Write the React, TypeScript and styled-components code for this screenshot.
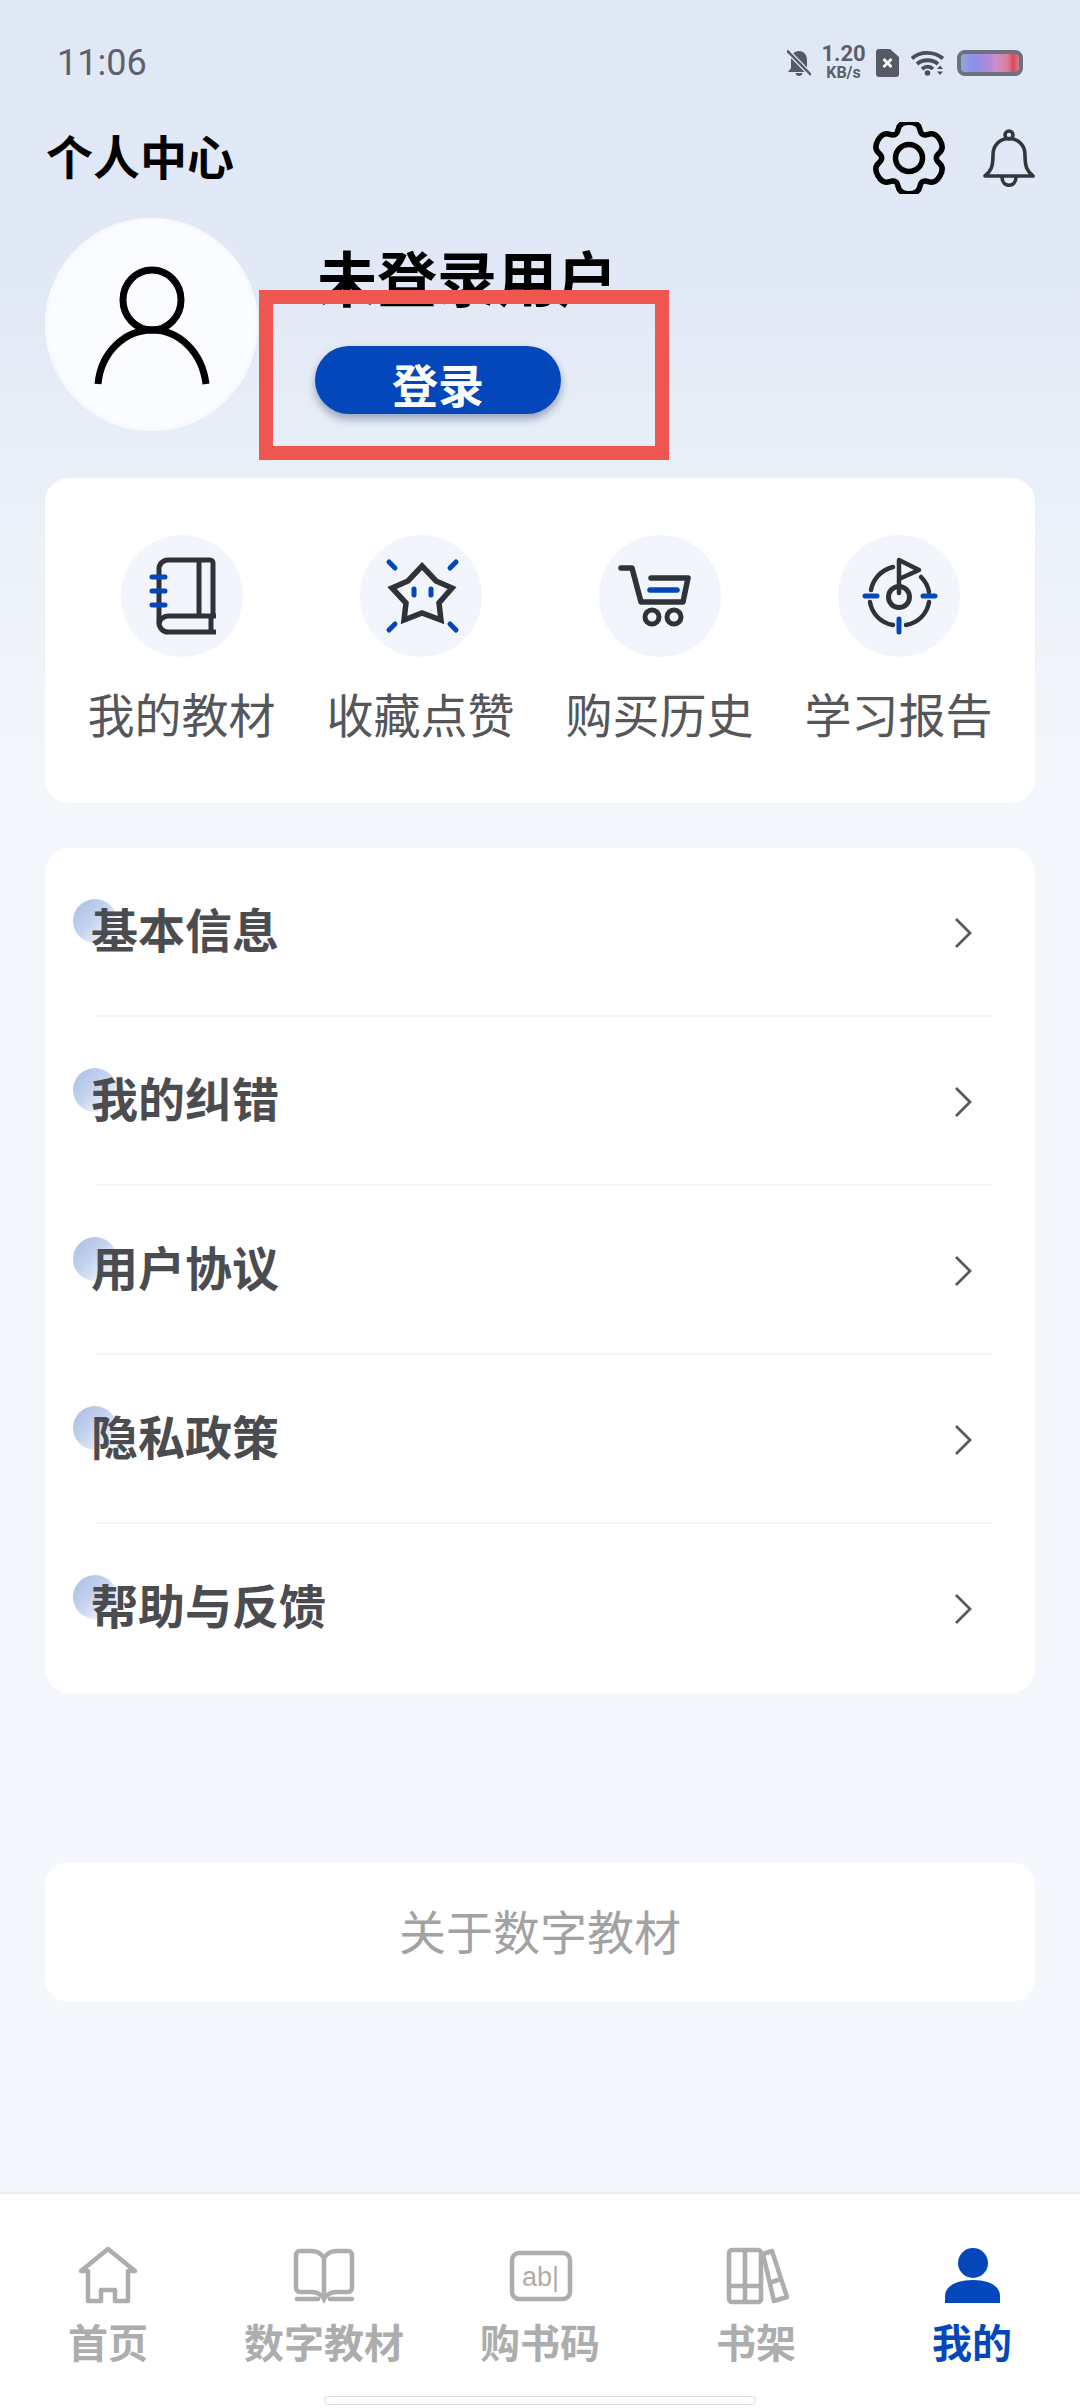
import styled, { createGlobalStyle } from 'styled-components';

const BLUE = '#0447ba';
const INK = '#2f3238';
const GREY = '#adadad';

const GlobalStyle = createGlobalStyle`
  html, body {
    margin: 0;
    padding: 0;
    background: #f4f7fb;
  }
  * {
    box-sizing: border-box;
  }
`;

const Page = styled.div`
  position: relative;
  width: 1080px;
  height: 2408px;
  display: flex;
  flex-direction: column;
  overflow: hidden;
  background: linear-gradient(180deg, #e0e8f5 0%, #e2e9f6 12%, #eaf0f8 20%, #f3f7fb 32%, #f4f7fb 100%);
  font-family: 'Noto Sans CJK SC', 'Noto Sans', sans-serif;
`;

const StatusBar = styled.div`
  height: 90px;
  padding: 36px 57px 0;
  display: flex;
  align-items: center;
  justify-content: space-between;
`;

const Time = styled.span`
  font-family: Roboto, sans-serif;
  font-size: 36px;
  color: #5a606c;
`;

const StatusIcons = styled.div`
  display: flex;
  align-items: center;
  gap: 12px;
`;

const Speed = styled.div`
  width: 41px;
  display: flex;
  flex-direction: column;
  align-items: center;
  font-family: Roboto, sans-serif;
  font-weight: 700;
  color: #5a5f6b;
  span:first-child {
    font-size: 22px;
    line-height: 20px;
  }
  span:last-child {
    font-size: 16px;
    line-height: 18px;
  }
`;

const Battery = styled.div`
  width: 66px;
  height: 26px;
  border: 4px solid #6c7180;
  border-radius: 8px;
  background: linear-gradient(90deg, #8fa8d8 0%, #8c8ee8 22%, #a98ada 42%, #cf8cc8 62%, #d97f96 80%, #d9465c 90%, #d9798c 100%);
`;

const Header = styled.header`
  height: 128px;
  padding: 0 45px 0 46px;
  display: flex;
  align-items: center;
  justify-content: space-between;
`;

const Title = styled.h1`
  margin: 0;
  font-size: 47px;
  font-weight: 700;
  color: #000;
`;

const HeaderIcons = styled.div`
  padding-top: 8px;
  display: flex;
  align-items: center;
  gap: 38px;
`;

const Profile = styled.section`
  height: 213px;
  padding-left: 45px;
  display: flex;
  gap: 57px;
`;

const Avatar = styled.div`
  width: 213px;
  height: 213px;
  border-radius: 50%;
  background: #fafcff;
  box-shadow: inset 0 0 0 3px #f6f9fe;
`;

const ProfileInfo = styled.div`
  padding-top: 24px;
  display: flex;
  flex-direction: column;
  align-items: flex-start;
`;

const UserName = styled.div`
  margin-left: 2px;
  font-size: 60px;
  line-height: 68px;
  font-weight: 700;
  color: #000;
`;

const LoginButton = styled.button`
  margin-top: 36px;
  width: 246px;
  height: 68px;
  border: 0;
  border-radius: 34px;
  padding: 6px 0 0;
  background: ${BLUE};
  box-shadow: 0 5px 9px rgba(50, 70, 110, 0.45);
  color: #fff;
  font-family: inherit;
  font-size: 46px;
  line-height: 62px;
  font-weight: 700;
`;

const RedFrame = styled.div`
  position: absolute;
  left: 259px;
  top: 290px;
  width: 410px;
  height: 170px;
  border: 14px solid #ef5650;
`;

const Card = styled.section<{ $top: number }>`
  margin: ${(p) => p.$top}px 45px 0;
  border-radius: 24px;
  background: #fff;
`;

const ShortcutGrid = styled(Card)`
  height: 325px;
  padding: 57px 17px 0;
  display: grid;
  grid-template-columns: repeat(4, 1fr);
  align-items: start;
`;

const Shortcut = styled.div`
  display: flex;
  flex-direction: column;
  align-items: center;
  gap: 26px;
`;

const ShortcutBadge = styled.div`
  width: 122px;
  height: 122px;
  border-radius: 50%;
  background: #f3f5fc;
`;

const ShortcutLabel = styled.span`
  font-size: 47px;
  line-height: 60px;
  color: #555659;
`;

const Row = styled.div<{ $last?: boolean }>`
  position: relative;
  height: 169px;
  padding: 0 62px 0 46px;
  display: flex;
  align-items: center;
  justify-content: space-between;
  &::before {
    content: '';
    position: absolute;
    left: 28px;
    top: 50%;
    width: 44px;
    height: 44px;
    margin-top: -34px;
    border-radius: 50%;
    background: linear-gradient(135deg, #a9bde4 0%, #c4d2ee 45%, #f6f8fd 90%);
  }
  &::after {
    content: '';
    display: ${(p) => (p.$last ? 'none' : 'block')};
    position: absolute;
    left: 50px;
    right: 43px;
    bottom: 0;
    height: 2px;
    background: #f5f5f7;
  }
`;

const RowLabel = styled.span`
  position: relative;
  padding-bottom: 10px;
  font-size: 47px;
  font-weight: 700;
  color: #4b4c50;
`;

const AboutCard = styled(Card)`
  height: 140px;
  padding-bottom: 6px;
  display: flex;
  align-items: center;
  justify-content: center;
  font-size: 47px;
  color: #a2a2a4;
`;

const TabBar = styled.nav`
  margin-top: auto;
  height: 216px;
  border-top: 2px solid #e9ebee;
  background: #fff;
  display: flex;
  flex-direction: column;
  align-items: center;
`;

const Tabs = styled.div`
  width: 100%;
  padding-top: 52px;
  display: grid;
  grid-template-columns: repeat(5, 1fr);
`;

const Tab = styled.div<{ $active?: boolean }>`
  display: flex;
  flex-direction: column;
  align-items: center;
  color: ${(p) => (p.$active ? BLUE : GREY)};
  font-size: 40px;
  line-height: 50px;
  font-weight: 700;
  svg {
    display: block;
    margin-bottom: 10px;
  }
`;

const HomeIndicator = styled.div`
  margin-top: 30px;
  width: 432px;
  height: 9px;
  border: 1.5px solid #dcdde0;
  border-radius: 5px;
  background: #fff;
`;

// gear outline: six lobes, corners smoothed by running the path through midpoints
const gearPath = () => {
  const pts: [number, number][] = [];
  for (let i = 0; i < 6; i++) {
    const a = -90 + i * 60;
    [
      [a - 15, 37],
      [a + 15, 37],
      [a + 30, 24.5],
    ].forEach(([deg, r]) => {
      const rad = (deg * Math.PI) / 180;
      pts.push([36 + r * Math.cos(rad), 36 + r * Math.sin(rad)]);
    });
  }
  const mid = (p: number[], q: number[]) => `${((p[0] + q[0]) / 2).toFixed(1)} ${((p[1] + q[1]) / 2).toFixed(1)}`;
  let d = `M${mid(pts[0], pts[1])}`;
  for (let i = 1; i <= pts.length; i++) {
    const cur = pts[i % pts.length];
    const next = pts[(i + 1) % pts.length];
    d += `Q${cur[0].toFixed(1)} ${cur[1].toFixed(1)} ${mid(cur, next)}`;
  }
  return d + 'Z';
};

const GearIcon = () => (
  <svg width='72' height='72' viewBox='0 0 72 72' fill='none' stroke='#000' strokeWidth='5.5'>
    <path d={gearPath()} strokeLinejoin='round' />
    <circle cx='36' cy='36' r='13.5' />
  </svg>
);

const BellIcon = () => (
  <svg width='52' height='58' viewBox='0 0 52 58' fill='none' stroke='#33363c' strokeWidth='3.6' strokeLinejoin='round'>
    <circle cx='26' cy='6' r='4' />
    <path d='M2 47c6-5 8-9 8-21C10 16 17 9.500 26 9.500S42 16 42 26c0 12 2 16 8 21Z' />
    <path d='M19 48c0 11 14 11 14 0' />
  </svg>
);

const MutedBell = () => (
  <svg width='24' height='28' viewBox='0 0 24 28'>
    <path fill='#555a66' d='M12 2c5 0 8 4 8 9v8l3 4H1l3-4v-8c0-5 3-9 8-9ZM8.500 24h7c0 4-7 4-7 0Z' />
    <path d='M0 1.500 24 26' stroke='#e0e7f4' strokeWidth='5' />
    <path d='M0 1.500 24 26' stroke='#555a66' strokeWidth='2.500' />
  </svg>
);

const SimIcon = () => (
  <svg width='23' height='28' viewBox='0 0 23 28'>
    <path fill='#555a66' d='M3 0h11l9 8v17a3 3 0 0 1-3 3H3a3 3 0 0 1-3-3V3a3 3 0 0 1 3-3Z' />
    <path d='M7.500 10 15.500 18M15.500 10 7.500 18' stroke='#fff' strokeWidth='2.800' />
  </svg>
);

const WifiIcon = () => (
  <svg width='34' height='26' viewBox='0 0 34 26' fill='none' stroke='#4a4f5a' strokeWidth='3.800'>
    <path d='M1 8.500C9 1 23 1 32 8.500' />
    <path d='M6 14c6-5 15-5 21 0' />
    <path d='M11 19c3.500-3 8-3 11 0' />
    <circle cx='16.500' cy='23' r='2.800' fill='#4a4f5a' stroke='none' />
    <path d='M26 19l3-3.500 3 3.500ZM26 21.500l3 3.500 3-3.500Z' fill='#4a4f5a' stroke='none' />
  </svg>
);

const AvatarIcon = () => (
  <svg width='213' height='213' viewBox='0 0 213 213' fill='none' stroke='#000' strokeWidth='7'>
    <ellipse cx='107' cy='82' rx='29' ry='30' />
    <path d='M53 166C56 134 80 112 107 112S157 134 161 166' />
  </svg>
);

const BookIcon = () => (
  <svg width='122' height='122' viewBox='0 0 122 122' fill='none' stroke={INK} strokeWidth='5'>
    <path strokeLinejoin='round' d='M92 81V28a3 3 0 0 0-3-3H47a9 9 0 0 0-9 9v54a9 9 0 0 0 9 9h48' />
    <path d='M78 25V81M95 81H47a9 9 0 0 0-9 8M90 81v14' />
    <path d='M31 42H44M31 56H44M31 70H44' stroke={BLUE} strokeLinecap='round' />
  </svg>
);

const StarIcon = () => (
  <svg width='122' height='122' viewBox='0 0 122 122' fill='none' stroke={INK} strokeWidth='5.500'>
    <path d='M62 31 76 46 92 53 79 68 81 85 62 78 44 85 46 68 32 53 48 46Z' />
    <g stroke={BLUE} strokeLinecap='round'>
      <path strokeWidth='5' d='M54 54V60M71 54V60' />
      <path strokeWidth='5' d='M29 27 35 33M96 27 90 33M29 95 35 89M96 95 90 89' />
    </g>
  </svg>
);

const CartIcon = () => (
  <svg width='122' height='122' viewBox='0 0 122 122' fill='none' stroke={INK} strokeWidth='5.500' strokeLinecap='round' strokeLinejoin='round'>
    <path d='M22 33H33L42 67H84L89 43H52' />
    <path d='M51 55H78' stroke={BLUE} />
    <circle cx='53' cy='82' r='7' strokeWidth='5' />
    <circle cx='75' cy='82' r='7' strokeWidth='5' />
  </svg>
);

const TargetIcon = () => (
  <svg width='122' height='122' viewBox='0 0 122 122' fill='none' stroke={INK} strokeWidth='4.500' strokeLinecap='round' strokeLinejoin='round'>
    <path d='M33 55C35 44 43 35 55 32M83 42C87 46 90 51 91 57M91 67C89 79 80 88 68 90M55 90C43 88 34 79 32 67' />
    <circle cx='61' cy='62' r='10.500' strokeWidth='5' />
    <path d='M61 58V25L81 35 61 44' />
    <path d='M27 61H39M85 61H97M61 84V97' stroke={BLUE} strokeWidth='5' />
  </svg>
);

const Chevron = () => (
  <svg width='20' height='34' viewBox='0 0 20 34' fill='none' stroke='#58595c' strokeWidth='2.800'>
    <path d='M3 3 17 17 3 31' />
  </svg>
);

const tabStroke = { fill: 'none', stroke: GREY, strokeWidth: 4.5 };

const TabHome = () => (
  <svg width='72' height='60' viewBox='0 0 72 60' {...tabStroke} strokeLinejoin='round'>
    <path d='M9 25 36 3 63 25H56V55H43V44H29V55H16V25Z' />
  </svg>
);

const TabBook = () => (
  <svg width='72' height='60' viewBox='0 0 72 60' {...tabStroke} strokeLinecap='round'>
    <path d='M36 12C33 7 28 5 23 5H12A4 4 0 0 0 8 9V42A4 4 0 0 0 12 46H24C29 46 34 49 36 53 38 49 43 46 48 46H60A4 4 0 0 0 64 42V9A4 4 0 0 0 60 5H49C44 5 39 7 36 12V52' />
    <path d='M9 53H30M42 53H64' />
  </svg>
);

const TabCode = () => (
  <svg width='72' height='60' viewBox='0 0 72 60' {...tabStroke}>
    <rect x='8' y='7' width='58' height='46' rx='7' />
    <text x='18' y='40' fontFamily='Liberation Sans, sans-serif' fontSize='27' fontWeight='400' fill={GREY} stroke='none'>
      ab|
    </text>
  </svg>
);

const TabShelf = () => (
  <svg width='72' height='60' viewBox='0 0 72 60' {...tabStroke} strokeLinejoin='round'>
    <rect x='9' y='4' width='32' height='52' rx='3' />
    <path d='M25 4V56M9 40H41' />
    <path d='M43 8 52 5 67 51 54 55ZM49 37 61 33' />
  </svg>
);

const TabMe = () => (
  <svg width='72' height='60' viewBox='0 0 72 60' fill={BLUE}>
    <circle cx='37' cy='17' r='15' />
    <path d='M9 57V50C9 40 21 34 37 34S64 40 64 50V57Z' />
  </svg>
);

const shortcuts = [
  { label: '我的教材', icon: <BookIcon /> },
  { label: '收藏点赞', icon: <StarIcon /> },
  { label: '购买历史', icon: <CartIcon /> },
  { label: '学习报告', icon: <TargetIcon /> },
];

const menu = ['基本信息', '我的纠错', '用户协议', '隐私政策', '帮助与反馈'];

const tabs = [
  { label: '首页', icon: <TabHome /> },
  { label: '数字教材', icon: <TabBook /> },
  { label: '购书码', icon: <TabCode /> },
  { label: '书架', icon: <TabShelf /> },
  { label: '我的', icon: <TabMe />, active: true },
];

const App = () => {
  return (
    <Page>
      <GlobalStyle />
      <StatusBar>
        <Time>11:06</Time>
        <StatusIcons>
          <MutedBell />
          <Speed>
            <span>1.20</span>
            <span>KB/s</span>
          </Speed>
          <SimIcon />
          <WifiIcon />
          <Battery />
        </StatusIcons>
      </StatusBar>
      <Header>
        <Title>个人中心</Title>
        <HeaderIcons>
          <GearIcon />
          <BellIcon />
        </HeaderIcons>
      </Header>
      <Profile>
        <Avatar>
          <AvatarIcon />
        </Avatar>
        <ProfileInfo>
          <UserName>未登录用户</UserName>
          <LoginButton>登录</LoginButton>
        </ProfileInfo>
      </Profile>
      <RedFrame />
      <ShortcutGrid $top={47}>
        {shortcuts.map((s) => (
          <Shortcut key={s.label}>
            <ShortcutBadge>{s.icon}</ShortcutBadge>
            <ShortcutLabel>{s.label}</ShortcutLabel>
          </Shortcut>
        ))}
      </ShortcutGrid>
      <Card $top={45}>
        {menu.map((m, i) => (
          <Row key={m} $last={i === menu.length - 1}>
            <RowLabel>{m}</RowLabel>
            <Chevron />
          </Row>
        ))}
      </Card>
      <AboutCard $top={169}>关于数字教材</AboutCard>
      <TabBar>
        <Tabs>
          {tabs.map((t) => (
            <Tab key={t.label} $active={t.active}>
              {t.icon}
              {t.label}
            </Tab>
          ))}
        </Tabs>
        <HomeIndicator />
      </TabBar>
    </Page>
  );
};

export default App;
